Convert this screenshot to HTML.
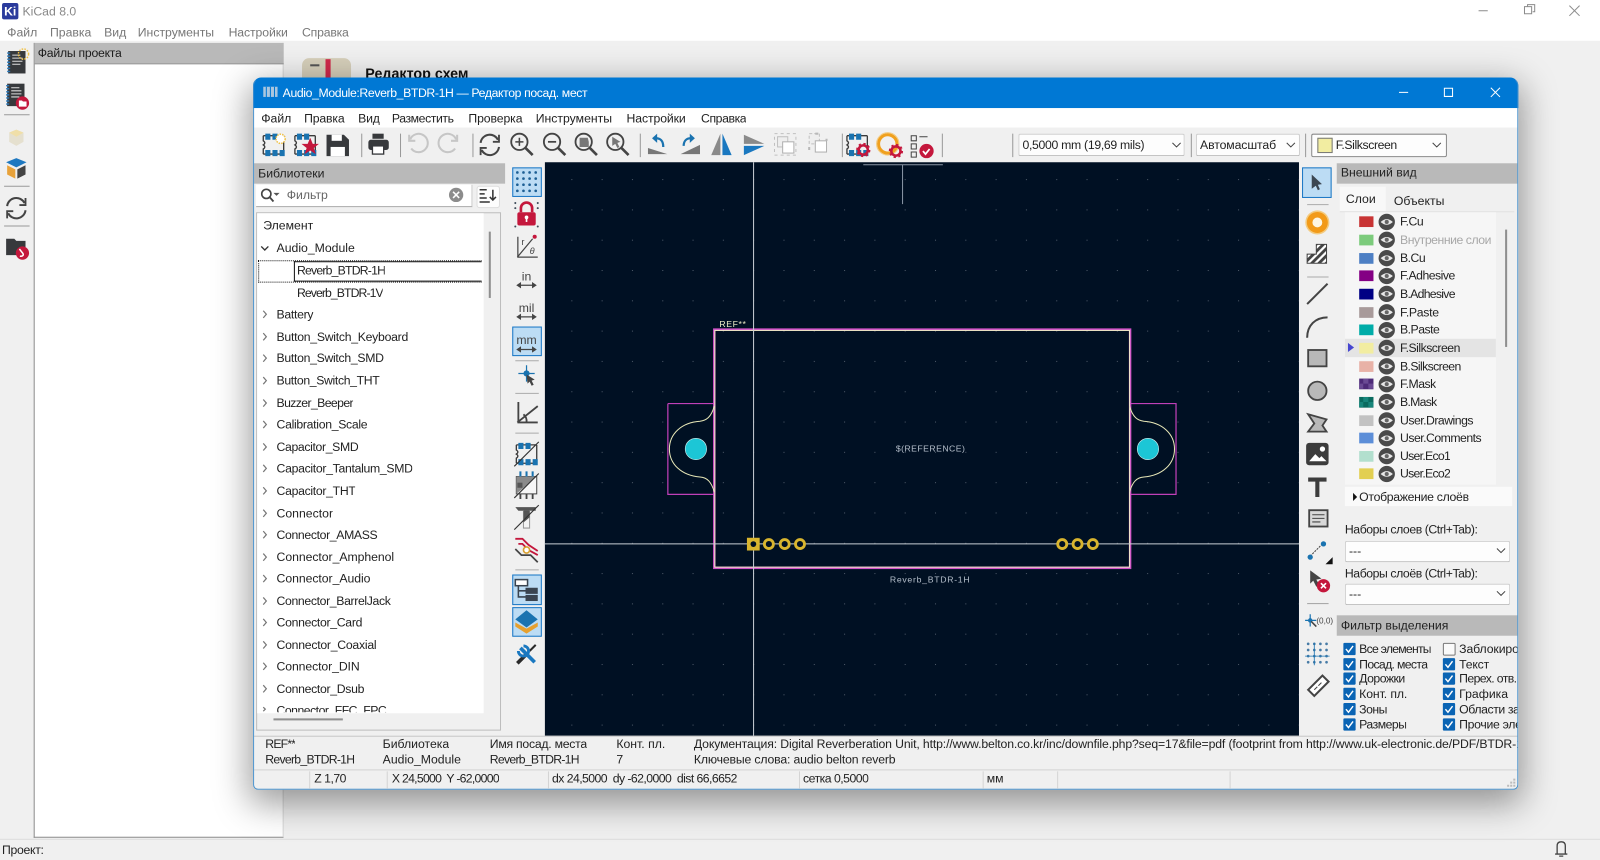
<!DOCTYPE html>
<html lang="ru"><head><meta charset="utf-8"><title>KiCad 8.0</title>
<style>
html,body{margin:0;padding:0;width:1600px;height:860px;overflow:hidden;background:#f0f0f0}
#s{position:absolute;left:0;top:0;width:1568px;height:843px;transform:scale(1.020408);transform-origin:0 0;font:12px/16px "Liberation Sans","Noto Sans CJK SC",sans-serif;color:#222;overflow:hidden;background:#f0f0f0}
.b{position:absolute}
.t{position:absolute;white-space:nowrap;overflow:hidden}
.g{color:#777}
.h{position:absolute;background:#b9b9b9}
.c{position:absolute;background:#fdfdfd;border:1px solid #d0d0d0;border-bottom-color:#bbb;box-sizing:border-box;border-radius:2px}
.hl{position:absolute;background:#bcdcf4;border:1px solid #1976c4;box-sizing:border-box}
.n1{letter-spacing:-.3px}
.n2{letter-spacing:-.5px}
.n3{letter-spacing:-.75px}
svg{position:absolute;left:0;top:0;overflow:visible}
</style></head><body><div id="s">

<!-- main KiCad window -->
<div class="b" style="left:0;top:0;width:1568px;height:40px;background:#fff"></div>
<div class="b" style="left:2px;top:3px;width:16px;height:16px;background:#2a3a9c;border-radius:2px;color:#fff;font:bold 12px/16px 'Liberation Sans',sans-serif;text-align:center">Ki</div>
<div class="t" style="left:22px;top:3px;color:#888">KiCad 8.0</div>
<div class="t g" style="left:7px;top:24px">Файл</div>
<div class="t g" style="left:49px;top:24px">Правка</div>
<div class="t g" style="left:102px;top:24px">Вид</div>
<div class="t g" style="left:135px;top:24px">Инструменты</div>
<div class="t g" style="left:224px;top:24px;letter-spacing:-.1px">Настройки</div>
<div class="t g" style="left:296px;top:24px;letter-spacing:-.2px">Справка</div>

<div class="b" style="left:33px;top:42px;width:245px;height:779px;background:#fff;border-left:1px solid #8a8a8a;border-bottom:1px solid #8a8a8a;border-right:1px solid #d5d5d5;box-sizing:border-box"></div>
<div class="h" style="left:34px;top:42px;width:244px;height:21px;border-bottom:1px solid #999;box-sizing:border-box"></div>
<div class="t" style="left:37px;top:44px;color:#1c1c1c;letter-spacing:-.25px">Файлы проекта</div>
<div class="b" style="left:0;top:822px;width:1568px;height:1px;background:#dcdcdc"></div>
<div class="t" style="left:2px;top:825px;color:#222;letter-spacing:-.3px">Проект:</div>
<div class="b" style="left:296px;top:57px;width:48px;height:24px;background:#d6cfba;border-radius:7px 7px 0 0"></div>
<div class="b" style="left:319px;top:58px;width:5px;height:18px;background:#d0284a"></div>
<div class="b" style="left:304px;top:63px;width:9px;height:2px;background:#555"></div>
<div class="t" style="left:358px;top:64px;font-weight:bold;font-size:14px;color:#111">Редактор схем</div>

<svg width="1568" height="843" viewBox="0 0 1568 843">
<defs>
<g id="nb"><rect x="-8" y="-11" width="17" height="22" fill="#37393c"/><path d="M-9-9h3M-9-6h3M-9-3h3M-9 0h3M-9 3h3M-9 6h3M-9 9h3" stroke="#2a78b8" stroke-width="1.4"/><path d="M-4-7h8M-4-4h10M-4-1h10M-4 2h8" stroke="#ddd" stroke-width="1"/></g>
<g id="refr" fill="none" stroke="#444" stroke-width="2"><path d="M-9-2A9 9 0 0 1 8-5"/><path d="M9 2A9 9 0 0 1-8 5"/><path d="M9-10V-3H3M-9 10V3H-3" stroke-width="1.8"/></g>
</defs>
<use href="#nb" x="16" y="61"/><circle cx="23" cy="53" r="5" fill="none" stroke="#f0c24a" stroke-width="1.5" stroke-dasharray="1.5 1.2"/>
<use href="#nb" x="15" y="93"/><circle cx="22" cy="101" r="6.5" fill="#c4173c"/><path d="M18.500 98.500h3l1 1h3.500v5h-7.500z" fill="#fff"/>
<path d="M4 112.500H29M4 182.500H29M4 221.500H29" stroke="#999"/>
<path d="M16 127l7 3v9l-7 4-7-4v-9z" fill="#e5e0cf"/><path d="M16 127l7 3-7 4-7-4z" fill="#f0dfa8"/>
<path d="M16 155l10 4-10 5-10-5z" fill="#1e78c0"/><path d="M7 162l8 4v9l-8-4z" fill="#e8a23a"/><path d="M25 162l-8 4v9l8-4z" fill="#444"/>
<use href="#refr" x="16" y="204"/>
<path d="M6 234h8l2 2h9v14H6z" fill="#37393c"/><circle cx="22" cy="248" r="6.5" fill="#c4173c"/><path d="M19 244l3.500 4.500c1 2-1 3-3 2.500" stroke="#fff" stroke-width="1.500" fill="none"/>
<path d="M1526 837v-8q0-4 4-4t4 4v8zM1524 837h12M1528 839h4" fill="none" stroke="#444" stroke-width="1.300"/>
<path d="M1449 10.500h9M1494 6.500h7v7h-7zM1497 6.500v-2h7v7h-2M1538 5.500l10 10M1548 5.500l-10 10" fill="none" stroke="#8c8c8c"/>
</svg>

<!-- child window -->
<div class="b" style="left:248px;top:76px;width:1240px;height:698px;border-radius:8px 8px 5px 5px;background:#f0f0f0;box-shadow:0 10px 34px 4px rgba(0,0,0,.38)"></div>
<div class="b" style="left:248px;top:76px;width:1240px;height:30px;background:#0078d4;border-radius:8px 8px 0 0"></div>
<div class="t" style="left:277px;top:83px;color:#fff;letter-spacing:-.37px">Audio_Module:Reverb_BTDR-1H — Редактор посад. мест</div>
<div class="b" style="left:249px;top:106px;width:1238px;height:19px;background:#fff"></div>
<div class="t" style="left:256px;top:108px">Файл</div>
<div class="t" style="left:298px;top:108px;letter-spacing:-.15px">Правка</div>
<div class="t" style="left:351px;top:108px;letter-spacing:-.2px">Вид</div>
<div class="t" style="left:384px;top:108px;letter-spacing:-.4px">Разместить</div>
<div class="t" style="left:459px;top:108px;letter-spacing:-.1px">Проверка</div>
<div class="t" style="left:525px;top:108px">Инструменты</div>
<div class="t" style="left:614px;top:108px;letter-spacing:-.1px">Настройки</div>
<div class="t" style="left:687px;top:108px;letter-spacing:-.4px">Справка</div>

<!-- combos -->
<div class="c" style="left:998px;top:131px;width:163px;height:22px"></div>
<div class="t n1" style="left:1002px;top:134px">0,5000 mm (19,69 mils)</div>
<div class="c" style="left:1172px;top:131px;width:102px;height:22px"></div>
<div class="t" style="left:1176px;top:134px;letter-spacing:-.1px">Автомасштаб</div>
<div class="c" style="left:1285px;top:131px;width:133px;height:23px;border-color:#8a8a8a"></div>
<div class="b" style="left:1291px;top:135px;width:13px;height:13px;background:#f2eda1;border:1px solid #777"></div>
<div class="t" style="left:1309px;top:134px;letter-spacing:-.4px">F.Silkscreen</div>

<!-- left panel -->
<div class="h" style="left:249px;top:160px;width:246px;height:20px"></div>
<div class="t" style="left:253px;top:162px">Библиотеки</div>
<div class="b" style="left:251px;top:181px;width:212px;height:22px;background:#fff;border-bottom:1px solid #aaa;border-right:1px solid #ccc;box-sizing:border-box"></div>
<div class="t" style="left:281px;top:183px;color:#666">Фильтр</div>
<div class="b" style="left:467px;top:182px;width:23px;height:22px;background:#fdfdfd;border:1px solid #ddd;box-sizing:border-box;border-radius:3px"></div>
<div class="b" style="left:251px;top:208px;width:240px;height:508px;border:1px solid #bdbdbd;background:#f0f0f0;box-sizing:border-box"></div>
<div class="b" style="left:252px;top:209px;width:222px;height:490px;background:#fff"></div>
<div class="t" style="left:258px;top:213px">Элемент</div>
<div class="t" style="left:271px;top:235px">Audio_Module</div>
<div class="b" style="left:253px;top:255px;width:219px;height:22px;border:1px dotted #111;border-right:0;box-sizing:border-box"></div>
<div class="b" style="left:288px;top:256px;width:184px;height:20px;border:1px solid #111;border-right:0;box-sizing:border-box"></div>
<div class="t" style="left:291px;top:257px;letter-spacing:-.78px">Reverb_BTDR-1H</div>
<div class="t" style="left:291px;top:279px;letter-spacing:-.9px">Reverb_BTDR-1V</div>
<div class="t" style="left:271px;top:300px;letter-spacing:-.3px">Battery</div>
<div class="t" style="left:271px;top:322px;letter-spacing:-.27px">Button_Switch_Keyboard</div>
<div class="t" style="left:271px;top:343px;letter-spacing:-.3px">Button_Switch_SMD</div>
<div class="t" style="left:271px;top:365px;letter-spacing:-.35px">Button_Switch_THT</div>
<div class="t" style="left:271px;top:387px;letter-spacing:-.6px">Buzzer_Beeper</div>
<div class="t" style="left:271px;top:408px;letter-spacing:-.3px">Calibration_Scale</div>
<div class="t" style="left:271px;top:430px;letter-spacing:-.35px">Capacitor_SMD</div>
<div class="t" style="left:271px;top:451px;letter-spacing:-.3px">Capacitor_Tantalum_SMD</div>
<div class="t" style="left:271px;top:473px;letter-spacing:-.3px">Capacitor_THT</div>
<div class="t" style="left:271px;top:495px">Connector</div>
<div class="t" style="left:271px;top:516px;letter-spacing:-.35px">Connector_AMASS</div>
<div class="t" style="left:271px;top:538px;letter-spacing:-.05px">Connector_Amphenol</div>
<div class="t" style="left:271px;top:559px;letter-spacing:-.05px">Connector_Audio</div>
<div class="t" style="left:271px;top:581px;letter-spacing:-.35px">Connector_BarrelJack</div>
<div class="t" style="left:271px;top:602px;letter-spacing:-.3px">Connector_Card</div>
<div class="t" style="left:271px;top:624px;letter-spacing:-.25px">Connector_Coaxial</div>
<div class="t" style="left:271px;top:645px;letter-spacing:-.1px">Connector_DIN</div>
<div class="t" style="left:271px;top:667px;letter-spacing:-.3px">Connector_Dsub</div>
<div class="t" style="left:271px;top:688px;height:10px;letter-spacing:-.5px">Connector_FFC_FPC</div>

<!-- canvas -->
<svg width="1568" height="843" viewBox="0 0 1568 843">
<defs><pattern id="gr" width="29.7" height="29.7" patternUnits="userSpaceOnUse" patternTransform="translate(649 324)"><rect x="0" y="0" width="1" height="1" fill="#4d5968"/></pattern>
<pattern id="hat" width="5" height="5" patternUnits="userSpaceOnUse" patternTransform="rotate(45)"><rect width="5" height="5" fill="#fff"/><rect width="2.800" height="5" fill="#444"/></pattern></defs>
<rect x="534" y="159" width="739" height="562" fill="#001023"/>
<rect x="534" y="159" width="739" height="562" fill="url(#gr)"/>
<path d="M846 161.500H924M884.500 161V200" stroke="#8a95a5"/>
<path d="M654.500 395.500H700M654.500 395.500V484.500H700M1107 395.500H1152.500V484.500H1107" fill="none" stroke="#c040b8" stroke-width="1.200"/>
<rect x="700" y="323" width="407.500" height="233.500" fill="none" stroke="#d050c8" stroke-width="2.400"/>
<rect x="700.500" y="323.800" width="406.500" height="232" fill="none" stroke="#f2efc8" stroke-width="1"/>
<path d="M700 398C697 409 692 412 686 412.800C668 414 656 425 656 440C656 455 668 466 686 467.500C693 468 697 472 700 482" fill="none" stroke="#e8e8b8" stroke-width="1"/>
<path d="M1107 398C1110 409 1115 412 1121 412.800C1139 414 1151 425 1151 440C1151 455 1139 466 1121 467.500C1114 468 1110 472 1107 482" fill="none" stroke="#e8e8b8" stroke-width="1"/>
<circle cx="682" cy="440" r="10.500" fill="#1cc6d6" stroke="#cfeeee" stroke-width=".6"/>
<circle cx="1125" cy="440" r="10.500" fill="#1cc6d6" stroke="#cfeeee" stroke-width=".6"/>
<path d="M534 533H1273M738.500 159V721" stroke="#c8ced4" stroke-width="1"/>
<rect x="732" y="527" width="12.500" height="12.500" fill="#d9b52e"/><circle cx="738.300" cy="533.200" r="2.800" fill="#001023"/>
<g fill="#001023" stroke="#d9b52e" stroke-width="2.800"><circle cx="753.500" cy="533.200" r="4.400"/><circle cx="769" cy="533.200" r="4.400"/><circle cx="784" cy="533.200" r="4.400"/><circle cx="1041" cy="533.200" r="4.400"/><circle cx="1056" cy="533.200" r="4.400"/><circle cx="1071" cy="533.200" r="4.400"/></g>
<text x="705" y="320.500" font-family="Liberation Sans" font-size="8.500" fill="#efefc8" letter-spacing=".6">REF**</text>
<text x="912" y="442.500" font-family="Liberation Sans" font-size="8.500" fill="#b6c0cc" letter-spacing=".45" text-anchor="middle">$(REFERENCE)</text>
<text x="911.500" y="571" font-family="Liberation Sans" font-size="8.500" fill="#b6c0cc" letter-spacing=".72" text-anchor="middle">Reverb_BTDR-1H</text>
</svg>

<!-- vertical toolbar highlights -->
<div class="hl" style="left:502px;top:164px;width:29px;height:29px"></div>
<div class="hl" style="left:502px;top:320px;width:29px;height:29px"></div>
<div class="hl" style="left:502px;top:563px;width:29px;height:30px"></div>
<div class="hl" style="left:502px;top:595px;width:29px;height:29px"></div>
<div class="hl" style="left:1276px;top:164px;width:29px;height:30px"></div>

<!-- right panel -->
<div class="h" style="left:1310px;top:160px;width:177px;height:20px"></div>
<div class="t" style="left:1314px;top:161px">Внешний вид</div>
<div class="b" style="left:1313px;top:183px;width:45px;height:24px;background:#f8f8f8"></div>
<div class="t" style="left:1319px;top:187px">Слои</div>
<div class="t" style="left:1366px;top:189px">Объекты</div>
<div class="b" style="left:1313px;top:207px;width:171px;height:1px;background:#e2e2e2"></div>
<div class="b" style="left:1318px;top:208px;width:148px;height:267px;background:#f6f6f6"></div>
<div class="b" style="left:1318px;top:332px;width:148px;height:18px;background:#e4e4e4"></div>
<div class="b" style="left:1475px;top:225px;width:2px;height:115px;background:#8f8f8f"></div>
<div class="t n2" style="left:1372px;top:209px">F.Cu</div>
<div class="t" style="left:1372px;top:227px;color:#a8a8a8;letter-spacing:-.45px">Внутренние слои</div>
<div class="t n2" style="left:1372px;top:245px">B.Cu</div>
<div class="t n2" style="left:1372px;top:262px">F.Adhesive</div>
<div class="t" style="left:1372px;top:280px;letter-spacing:-.7px">B.Adhesive</div>
<div class="t n1" style="left:1372px;top:298px">F.Paste</div>
<div class="t n2" style="left:1372px;top:315px">B.Paste</div>
<div class="t n2" style="left:1372px;top:333px">F.Silkscreen</div>
<div class="t" style="left:1372px;top:351px;letter-spacing:-.6px">B.Silkscreen</div>
<div class="t n2" style="left:1372px;top:368px">F.Mask</div>
<div class="t" style="left:1372px;top:386px;letter-spacing:-.7px">B.Mask</div>
<div class="t n2" style="left:1372px;top:404px">User.Drawings</div>
<div class="t n2" style="left:1372px;top:421px">User.Comments</div>
<div class="t" style="left:1372px;top:439px;letter-spacing:-.7px">User.Eco1</div>
<div class="t" style="left:1372px;top:456px;letter-spacing:-.7px">User.Eco2</div>
<div class="b" style="left:1318px;top:477px;width:164px;height:19px;background:#fafafa"></div>
<div class="t n1" style="left:1332px;top:479px">Отображение слоёв</div>
<div class="t" style="left:1318px;top:511px;letter-spacing:-.42px">Наборы слоев (Ctrl+Tab):</div>
<div class="c" style="left:1318px;top:530px;width:162px;height:21px"></div>
<div class="t" style="left:1322px;top:532px">---</div>
<div class="t" style="left:1318px;top:554px;letter-spacing:-.42px">Наборы слоёв (Ctrl+Tab):</div>
<div class="c" style="left:1318px;top:572px;width:162px;height:21px"></div>
<div class="t" style="left:1322px;top:574px">---</div>
<div class="h" style="left:1310px;top:603px;width:177px;height:20px"></div>
<div class="t" style="left:1314px;top:605px">Фильтр выделения</div>
<div class="t n3" style="left:1332px;top:628px">Все элементы</div>
<div class="t" style="left:1332px;top:643px;letter-spacing:-.65px">Посад. места</div>
<div class="t n2" style="left:1332px;top:657px">Дорожки</div>
<div class="t" style="left:1332px;top:672px;letter-spacing:-.1px">Конт. пл.</div>
<div class="t n2" style="left:1332px;top:687px">Зоны</div>
<div class="t n2" style="left:1332px;top:702px">Размеры</div>
<div class="t" style="left:1430px;top:628px;width:57px;letter-spacing:-.1px">Заблокированные</div>
<div class="t" style="left:1430px;top:643px;width:57px;letter-spacing:-.2px">Текст</div>
<div class="t" style="left:1430px;top:657px;width:57px;letter-spacing:-.6px">Перех. отв.</div>
<div class="t" style="left:1430px;top:672px;width:57px">Графика</div>
<div class="t" style="left:1430px;top:687px;width:57px;letter-spacing:-.4px">Области запрета</div>
<div class="t" style="left:1430px;top:702px;width:57px;letter-spacing:-.3px">Прочие элементы</div>

<!-- messages + status -->
<div class="b" style="left:249px;top:721px;width:1238px;height:1px;background:#c8c8c8"></div>
<div class="b" style="left:249px;top:754px;width:1238px;height:1px;background:#d4d4d4"></div>
<div class="t" style="left:260px;top:721px;letter-spacing:-.8px">REF**</div>
<div class="t" style="left:260px;top:736px;letter-spacing:-.72px">Reverb_BTDR-1H</div>
<div class="t" style="left:375px;top:721px">Библиотека</div>
<div class="t" style="left:375px;top:736px">Audio_Module</div>
<div class="t" style="left:480px;top:721px;letter-spacing:-.25px">Имя посад. места</div>
<div class="t" style="left:480px;top:736px;letter-spacing:-.72px">Reverb_BTDR-1H</div>
<div class="t" style="left:604px;top:721px">Конт. пл.</div>
<div class="t" style="left:604px;top:736px">7</div>
<div class="t" style="left:680px;top:721px;width:807px;letter-spacing:-.13px">Документация: Digital Reverberation Unit, http://www.belton.co.kr/inc/downfile.php?seq=17&amp;file=pdf (footprint from http://www.uk-electronic.de/PDF/BTDR-1.pdf)</div>
<div class="t" style="left:680px;top:736px;letter-spacing:-.15px">Ключевые слова: audio belton reverb</div>
<div class="t n2" style="left:308px;top:755px">Z 1,70</div>
<div class="t" style="left:384px;top:755px;letter-spacing:-.7px">X 24,5000&nbsp; Y -62,0000</div>
<div class="t" style="left:541px;top:755px;letter-spacing:-.55px">dx 24,5000&nbsp; dy -62,0000&nbsp; dist 66,6652</div>
<div class="t n2" style="left:787px;top:755px">сетка 0,5000</div>
<div class="t" style="left:967px;top:755px">мм</div>
<div class="b" style="left:248px;top:76px;width:1240px;height:698px;border-radius:8px 8px 5px 5px;border:1px solid #3c8ccc;border-top-color:transparent;box-sizing:border-box;pointer-events:none"></div>

<!-- overlay icons -->
<svg width="1568" height="843" viewBox="0 0 1568 843">
<defs>
<g id="fp"><path d="M-10-9V-4Q-7-2-10 0Q-7 2-10 4V9M-10-9H10M-10 9H10M10-9V9" fill="none" stroke="#3a3a3a" stroke-width="1.300"/><path d="M-8-11h5v6h-5zM-1-11h5v6h-5zM-8 5h5v6h-5zM-1 5h5v6h-5zM6 5h5v6h-5z" fill="#1a73b0"/></g>
<g id="glass" fill="none" stroke="#444"><circle cx="-2" cy="-3" r="8" stroke-width="1.800"/><path d="M4 3l7 7" stroke-width="2.600"/></g>
<g id="gear"><circle r="4.500" fill="none" stroke="#c4173c" stroke-width="2.500"/><circle r="6" fill="none" stroke="#c4173c" stroke-width="2" stroke-dasharray="2.200 2.500"/></g>
<g id="eye"><circle r="8" fill="#4a4a4a"/><path d="M-6 0Q0-5.500 6 0Q0 5.500-6 0Z" fill="#e8e8e8"/><circle r="2" fill="#666"/></g>
<g id="cb"><rect width="12" height="12" rx="1" fill="#0a64b4"/><path d="M2.500 6l2.500 3 4.500-6" fill="none" stroke="#fff" stroke-width="1.400"/></g>
<g id="strike"><path d="M-12 12L12-12" stroke="#333" stroke-width="1.100"/></g>
<g id="dots" fill="#1d5f94"><circle cx="-9" cy="-9" r="1.300"/><circle cx="-3" cy="-9" r="1.300"/><circle cx="3" cy="-9" r="1.300"/><circle cx="9" cy="-9" r="1.300"/><circle cx="-9" cy="-3" r="1.300"/><circle cx="-3" cy="-3" r="1.300"/><circle cx="3" cy="-3" r="1.300"/><circle cx="9" cy="-3" r="1.300"/><circle cx="-9" cy="3" r="1.300"/><circle cx="-3" cy="3" r="1.300"/><circle cx="3" cy="3" r="1.300"/><circle cx="9" cy="3" r="1.300"/><circle cx="-9" cy="9" r="1.300"/><circle cx="-3" cy="9" r="1.300"/><circle cx="3" cy="9" r="1.300"/><circle cx="9" cy="9" r="1.300"/></g>
</defs>

<!-- title icons -->
<path d="M258 85h14v10h-14z" fill="#c8d4e0" opacity=".85"/><path d="M261 85v10M265 85v10M269 85v10" stroke="#0078d4"/>
<path d="M1371 90.500h9M1415.500 86.500h8v8h-8zM1461 86l9 9M1470 86l-9 9" fill="none" stroke="#fff" stroke-width="1"/>

<!-- top toolbar -->
<use href="#fp" x="268" y="142"/><circle cx="275" cy="136" r="4.500" fill="#fff" stroke="#f0c24a" stroke-width="1.500" stroke-dasharray="1.500 1"/>
<use href="#fp" x="299" y="142"/><path d="M304 135l2.500 6h6l-5 4 2 6-5.500-3.500-5.500 3.500 2-6-5-4h6z" fill="#c4173c"/>
<path d="M320 132h17l5 5v16h-22z" fill="#37393c"/><rect x="325" y="132" width="10" height="6" fill="#fff"/><rect x="324" y="144" width="14" height="9" fill="#fff"/>
<path d="M354.500 131v23M392.500 131v23M463.500 131v23M627.500 131v23M825.500 131v23M923.500 131v23M992.500 131v23M1167.500 131v23M1279.500 131v23" stroke="#999"/>
<rect x="361" y="137" width="20" height="10" rx="2.500" fill="#37393c"/><rect x="365" y="131" width="11" height="5" fill="#37393c"/><rect x="365" y="143" width="11" height="8" fill="#fff" stroke="#37393c" stroke-width="1.300"/>
<path d="M402 136.500a9 9 0 1 1 1 9" fill="none" stroke="#c6c6c6" stroke-width="2"/><path d="M401 132v6h6" fill="none" stroke="#c6c6c6" stroke-width="2"/>
<path d="M447 136.500a9 9 0 1 0-1 9" fill="none" stroke="#c6c6c6" stroke-width="2"/><path d="M448 132v6h-6" fill="none" stroke="#c6c6c6" stroke-width="2"/>
<use href="#refr" x="480" y="142"/>
<use href="#glass" x="511" y="142"/><path d="M505 139h8M509 135v8" stroke="#444" stroke-width="1.500"/>
<use href="#glass" x="543" y="142"/><path d="M537 139h8" stroke="#444" stroke-width="1.700"/>
<use href="#glass" x="574" y="142"/><path d="M568 135h8l1 4v5h-9z" fill="#777"/>
<use href="#glass" x="605" y="142"/><path d="M600 134l8 5-3 1 2 4-2 1-2-4-3 2z" fill="#777"/>
<path d="M635 145L654 151H635z" fill="#777"/><path d="M650 144C650 138 647 135.500 643 135.500" fill="none" stroke="#1a73b0" stroke-width="2.200"/><path d="M644 131v9l-5-4.500z" fill="#1a73b0"/>
<path d="M686 142V151H667z" fill="#777"/><path d="M670 143C670 138 673 135.500 677 135.500" fill="none" stroke="#1a73b0" stroke-width="2.200"/><path d="M676 131v9l5-4.500z" fill="#1a73b0"/>
<path d="M706 131v21h-9z" fill="#8a8a8a"/><path d="M708 131v21h9z" fill="#1a78c0"/>
<path d="M729 132l20 9h-20z" fill="#8a8a8a"/><path d="M729 143h20l-20 9z" fill="#1a78c0"/>
<rect x="759" y="131" width="21" height="21" fill="none" stroke="#c0c0c0" stroke-dasharray="3 3"/><rect x="762" y="134" width="10" height="10" fill="#eee" stroke="#c0c0c0"/><rect x="767" y="139" width="11" height="11" fill="#fff" stroke="#b0b0b0"/>
<rect x="793" y="131" width="10" height="10" fill="#eee" stroke="#c0c0c0" stroke-dasharray="3 2"/><rect x="799" y="138" width="11" height="11" fill="#fff" stroke="#b0b0b0"/><path d="M799 131h3M810 136v2M793 144v3" stroke="#b8b8b8" stroke-width="2"/>
<use href="#fp" x="840" y="142"/><use href="#gear" x="846" y="147"/>
<circle cx="870" cy="141" r="9" fill="none" stroke="#f0a01e" stroke-width="3"/><circle cx="870" cy="141" r="11" fill="none" stroke="#f3cb80" stroke-width="1"/><use href="#gear" x="878" y="148"/>
<path d="M893 133h5v5h-5zM893 141h5v5h-5zM893 149h5v5h-5zM901 134h8" fill="none" stroke="#444"/><circle cx="908" cy="148" r="7" fill="#c4173c"/><path d="M904.500 148l2.500 3 4-5" fill="none" stroke="#fff" stroke-width="1.700"/>
<g fill="none" stroke="#444"><path d="M1149 140l4 4 4-4M1261 140l4 4 4-4M1404 140l4 4 4-4"/></g>

<!-- search -->
<circle cx="261" cy="190" r="4.500" fill="none" stroke="#444" stroke-width="1.600"/><path d="M264.500 193.500l3.500 4" stroke="#444" stroke-width="1.800"/><path d="M268 189h6l-3 3z" fill="#555"/>
<circle cx="447" cy="191" r="7" fill="#8c8c8c"/><path d="M444 188l6 6M450 188l-6 6" stroke="#fff" stroke-width="1.500"/>
<path d="M470 186h7M470 190h5M470 194h7M470 198h10M483 186v10M480 193l3 3 3-3" fill="none" stroke="#333" stroke-width="1.500"/>

<!-- tree chevrons -->
<path d="M256 241.500l3.500 3.500 3.500-3.500" fill="none" stroke="#333" stroke-width="1.300"/>
<path d="M258 304.500l3 3.500-3 3.500M258 326.500l3 3.500-3 3.500M258 347.500l3 3.500-3 3.500M258 369.500l3 3.500-3 3.500M258 391.500l3 3.500-3 3.500M258 412.500l3 3.500-3 3.500M258 434.500l3 3.500-3 3.500M258 455.500l3 3.500-3 3.500M258 477.500l3 3.500-3 3.500M258 499.500l3 3.500-3 3.500M258 520.500l3 3.500-3 3.500M258 542.500l3 3.500-3 3.500M258 563.500l3 3.500-3 3.500M258 585.500l3 3.500-3 3.500M258 606.500l3 3.500-3 3.500M258 628.500l3 3.500-3 3.500M258 649.500l3 3.500-3 3.500M258 671.500l3 3.500-3 3.500M258 693l2 2-2 2" fill="none" stroke="#777" stroke-width="1.200"/>
<rect x="479" y="227" width="2" height="65" fill="#8f8f8f"/>
<rect x="268" y="704" width="68" height="2" fill="#8f8f8f"/>

<!-- left vtoolbar -->
<use href="#dots" x="516" y="178"/>
<g fill="#3d4a58"><circle cx="505" cy="204" r="1"/><circle cx="527" cy="204" r="1"/><circle cx="505" cy="199" r="1"/><circle cx="527" cy="199" r="1"/><circle cx="505" cy="222" r="1"/><circle cx="527" cy="222" r="1"/></g>
<rect x="507" y="208" width="18" height="13" rx="2" fill="#c4173c"/><path d="M510.500 208v-4a5.500 5.500 0 0 1 11 0v4" fill="none" stroke="#c4173c" stroke-width="2.600"/><circle cx="516" cy="213" r="1.800" fill="#fff"/><rect x="515.200" y="213" width="1.600" height="4.500" fill="#fff"/>
<path d="M507.500 232v20H527M507 252l15-18" fill="none" stroke="#444" stroke-width="1.200"/><circle cx="524" cy="232" r="2" fill="#c4173c"/>
<text x="511" y="240" font-family="Liberation Sans" font-size="9" fill="#444">r</text><text x="519" y="249" font-family="Liberation Sans" font-size="9" font-style="italic" fill="#444">θ</text>
<text x="516" y="275" font-family="Liberation Sans" font-size="12" fill="#444" text-anchor="middle">in</text>
<text x="516" y="306" font-family="Liberation Sans" font-size="12" fill="#444" text-anchor="middle">mil</text>
<text x="516" y="337" font-family="Liberation Sans" font-size="12" fill="#444" text-anchor="middle">mm</text>
<g stroke="#444" stroke-width="1.200" fill="#444"><path d="M507 279.500h18M507 279.500l3-2v4zM525 279.500l-3-2v4z"/><path d="M507 310.500h18M507 310.500l3-2v4zM525 310.500l-3-2v4z"/><path d="M507 342.500h18M507 342.500l3-2v4zM525 342.500l-3-2v4z"/></g>
<path d="M505 353.500h23M505 385.500h23M505 424.500h23M505 558.500h23" stroke="#aaa"/>
<path d="M508 366h16M516 358v16" stroke="#1a73b0" stroke-width="1.200"/><circle cx="516" cy="366" r="3" fill="#1a73b0"/><path d="M516 367l8 5-3 1 2 4-2 1-2-4-2 2z" fill="#444"/>
<path d="M508 394v20h19M507 414l20-16M516 414a9 9 0 0 0-3-8" fill="none" stroke="#444" stroke-width="1.800"/>
<use href="#fp" x="516" y="445"/><use href="#strike" x="516" y="445"/>
<rect x="506" y="467" width="20" height="17" fill="#f6f6f6" stroke="#444"/><path d="M506 467h20L506 484z" fill="#8a8a8a"/><rect x="507" y="473" width="5" height="5" fill="#555"/><path d="M510 462v5M516 462v5M522 462v5" stroke="#1a73b0" stroke-width="2"/><path d="M510 484v5M516 484v5M522 484v5" stroke="#444" stroke-width="1.800"/><use href="#strike" x="516" y="476"/>
<path d="M505 497h20v3.500h-17z" fill="#555"/><path d="M513 500.500h6v17h-6z" fill="#f4f4f4" stroke="#999"/><path d="M513 500h6v7l-6 5z" fill="#555"/><use href="#strike" x="516" y="507"/>
<path d="M505 528h7l6 6 9 6M508 533h4l6 6 9 5" fill="none" stroke="#c4173c" stroke-width="1.800"/><path d="M505 538l6 6h9l7 7" fill="none" stroke="#444" stroke-width="1.700"/><circle cx="516" cy="539" r="3" fill="#fff" stroke="#d9a030" stroke-width="1.600"/>
<g fill="#3a4450"><rect x="505" y="568" width="12" height="6" fill="#fff" stroke="#3a4450" stroke-width="1.500"/><rect x="515" y="576" width="12" height="6"/><rect x="515" y="583" width="12" height="6"/></g><path d="M508 574v11h7M508 579h7" fill="none" stroke="#3a4450" stroke-width="1.500"/>
<path d="M505 610l11 6 11-6v4l-11 7-11-7z" fill="#e6a02e"/><path d="M516 598l11 9-11 8-11-8z" fill="#1a73b0"/>
<path d="M525 632l-6 6" stroke="#2a2a2a" stroke-width="2"/><path d="M517 640l-10 10" stroke="#2a2a2a" stroke-width="3.600"/><path d="M510 635l14 14" stroke="#1a78c0" stroke-width="3.600"/><path d="M512 632a5 5 0 1 0-5 5" transform="rotate(180 510 635)" fill="none" stroke="#1a78c0" stroke-width="2.800"/>

<!-- right vtoolbar -->
<path d="M1285.500 171l10 9.500-4 .5 2 4.500-2 1-2-4.500-4 3z" fill="#3c4752"/>
<path d="M1281 200.500h21M1281 271.500h21M1281 591.500h21" stroke="#aaa"/>
<circle cx="1291" cy="218" r="11.800" fill="#f3cb80"/><circle cx="1291" cy="218" r="10.300" fill="#f29a18"/><circle cx="1291" cy="218" r="4.800" fill="#fdf6e4"/>
<path d="M1281 249h9v-9.500h10V258h-19z" fill="url(#hat)" stroke="#444" stroke-width="1"/>
<path d="M1281 298l20-20" stroke="#444" stroke-width="2"/>
<path d="M1281 331c0-12 8-20 20-20" fill="none" stroke="#444" stroke-width="2"/>
<rect x="1282" y="343" width="18" height="16" fill="#b8b8b8" stroke="#444" stroke-width="1.800"/>
<circle cx="1291" cy="383" r="9" fill="#b8b8b8" stroke="#444" stroke-width="1.800"/>
<path d="M1282 406l18 5-4 6 4 6-18 0 6-8z" fill="#b8b8b8" stroke="#444" stroke-width="1.800"/>
<rect x="1280" y="434" width="22" height="22" rx="3" fill="#3c3c3c"/><path d="M1283 452l6-7 4 4 2-2 5 5z" fill="#fff"/><circle cx="1296" cy="440" r="2.600" fill="#fff"/>
<path d="M1282 468h18v4h-7v15h-4v-15h-7z" fill="#3c3c3c"/>
<rect x="1283" y="500" width="18" height="16" fill="#d8d8d8" stroke="#444" stroke-width="1.800"/><path d="M1286 504.500h12M1286 508h12M1286 511.500h8" stroke="#444"/>
<path d="M1284 545l12-12" stroke="#444" stroke-dasharray="2 1"/><circle cx="1284" cy="546" r="2.600" fill="#1a73b0"/><circle cx="1297" cy="533" r="2.600" fill="#1a73b0"/><path d="M1306 546v7h-7z" fill="#111"/>
<path d="M1284 559l11 8-5 1 3 5-3 2-3-6-3 3z" fill="#444"/><circle cx="1297" cy="574" r="6.500" fill="#c4173c"/><path d="M1294.500 571.500l5 5M1299.500 571.500l-5 5" stroke="#fff" stroke-width="1.600"/>
<path d="M1279 608h11M1284 602v12" stroke="#1a73b0" stroke-width="1.200"/><circle cx="1284" cy="608" r="2.200" fill="#1a73b0"/><path d="M1285 609l5 5" stroke="#444" stroke-width="1.500"/>
<text x="1290" y="611" font-family="Liberation Sans" font-size="8" fill="#444">(0,0)</text>
<use href="#dots" x="1291" y="640" opacity=".8"/><path d="M1279 643h24M1288 630v22" stroke="#1a73b0" stroke-width=".8"/>
<path d="M1282 676l14-14 6 6-14 14z" fill="#fff" stroke="#444" stroke-width="2"/><path d="M1288 676l3-3M1292 672l3-3" stroke="#444"/>

<!-- layers -->
<path d="M1321 336v9l6-4.500z" fill="#4646d0"/>
<g>
<rect x="1332" y="212" width="14" height="10.500" fill="#c83434"/>
<rect x="1332" y="230" width="14" height="10.500" fill="#7ccb7c"/>
<rect x="1332" y="248" width="14" height="10.500" fill="#4d7fc4"/>
<rect x="1332" y="265" width="14" height="10.500" fill="#840084"/>
<rect x="1332" y="283" width="14" height="10.500" fill="#000084"/>
<rect x="1332" y="301" width="14" height="10.500" fill="#a89a9a"/>
<rect x="1332" y="318" width="14" height="10.500" fill="#00aca8"/>
<rect x="1332" y="336" width="14" height="10.500" fill="#f2eda1"/>
<rect x="1332" y="354" width="14" height="10.500" fill="#e8b2a7"/>
<rect x="1332" y="371" width="14" height="10.500" fill="#4d2a78"/>
<rect x="1332" y="389" width="14" height="10.500" fill="#0a6b5f"/>
<rect x="1332" y="407" width="14" height="10.500" fill="#c2c2c2"/>
<rect x="1332" y="424" width="14" height="10.500" fill="#5c8ed8"/>
<rect x="1332" y="442" width="14" height="10.500" fill="#b2dfce"/>
<rect x="1332" y="459" width="14" height="10.500" fill="#e2cf52"/>
</g>
<path d="M1336 371h5v5h-5zM1341 376h5v5h-5zM1332 376h4v5h-4z" fill="#6a4a94"/>
<path d="M1336 389h5v5h-5zM1341 394h5v5h-5zM1332 394h4v5h-4z" fill="#17857a"/>
<use href="#eye" x="1359" y="217.500"/><use href="#eye" x="1359" y="235"/><use href="#eye" x="1359" y="253"/><use href="#eye" x="1359" y="270.500"/><use href="#eye" x="1359" y="288"/><use href="#eye" x="1359" y="306"/><use href="#eye" x="1359" y="323.500"/><use href="#eye" x="1359" y="341"/><use href="#eye" x="1359" y="359"/><use href="#eye" x="1359" y="376.500"/><use href="#eye" x="1359" y="394"/><use href="#eye" x="1359" y="412"/><use href="#eye" x="1359" y="429.500"/><use href="#eye" x="1359" y="447"/><use href="#eye" x="1359" y="464.500"/>
<path d="M1326 483v8l4-4z" fill="#111"/>
<path d="M1467 537.500l4 4 4-4M1467 579.500l4 4 4-4" fill="none" stroke="#444"/>
<use href="#cb" x="1316.500" y="630"/><use href="#cb" x="1316.500" y="645"/><use href="#cb" x="1316.500" y="659"/><use href="#cb" x="1316.500" y="674"/><use href="#cb" x="1316.500" y="689"/><use href="#cb" x="1316.500" y="704"/>
<rect x="1414.500" y="630.500" width="11.500" height="11.500" rx="1" fill="#fafafa" stroke="#777"/>
<use href="#cb" x="1414" y="645"/><use href="#cb" x="1414" y="659"/><use href="#cb" x="1414" y="674"/><use href="#cb" x="1414" y="689"/><use href="#cb" x="1414" y="704"/>

<!-- status dividers -->
<path d="M303.500 756v17M379.500 756v17M537.500 756v17M783.500 756v17M963.500 756v17M1036.500 756v17M1205.500 756v17" stroke="#d4d4d4"/>
<path d="M1483 769h2v2h-2zM1480 769h2v2h-2zM1477 769h2v2h-2zM1483 766h2v2h-2zM1480 766h2v2h-2zM1483 763h2v2h-2z" fill="#bbb"/>
</svg>
</div></body></html>
